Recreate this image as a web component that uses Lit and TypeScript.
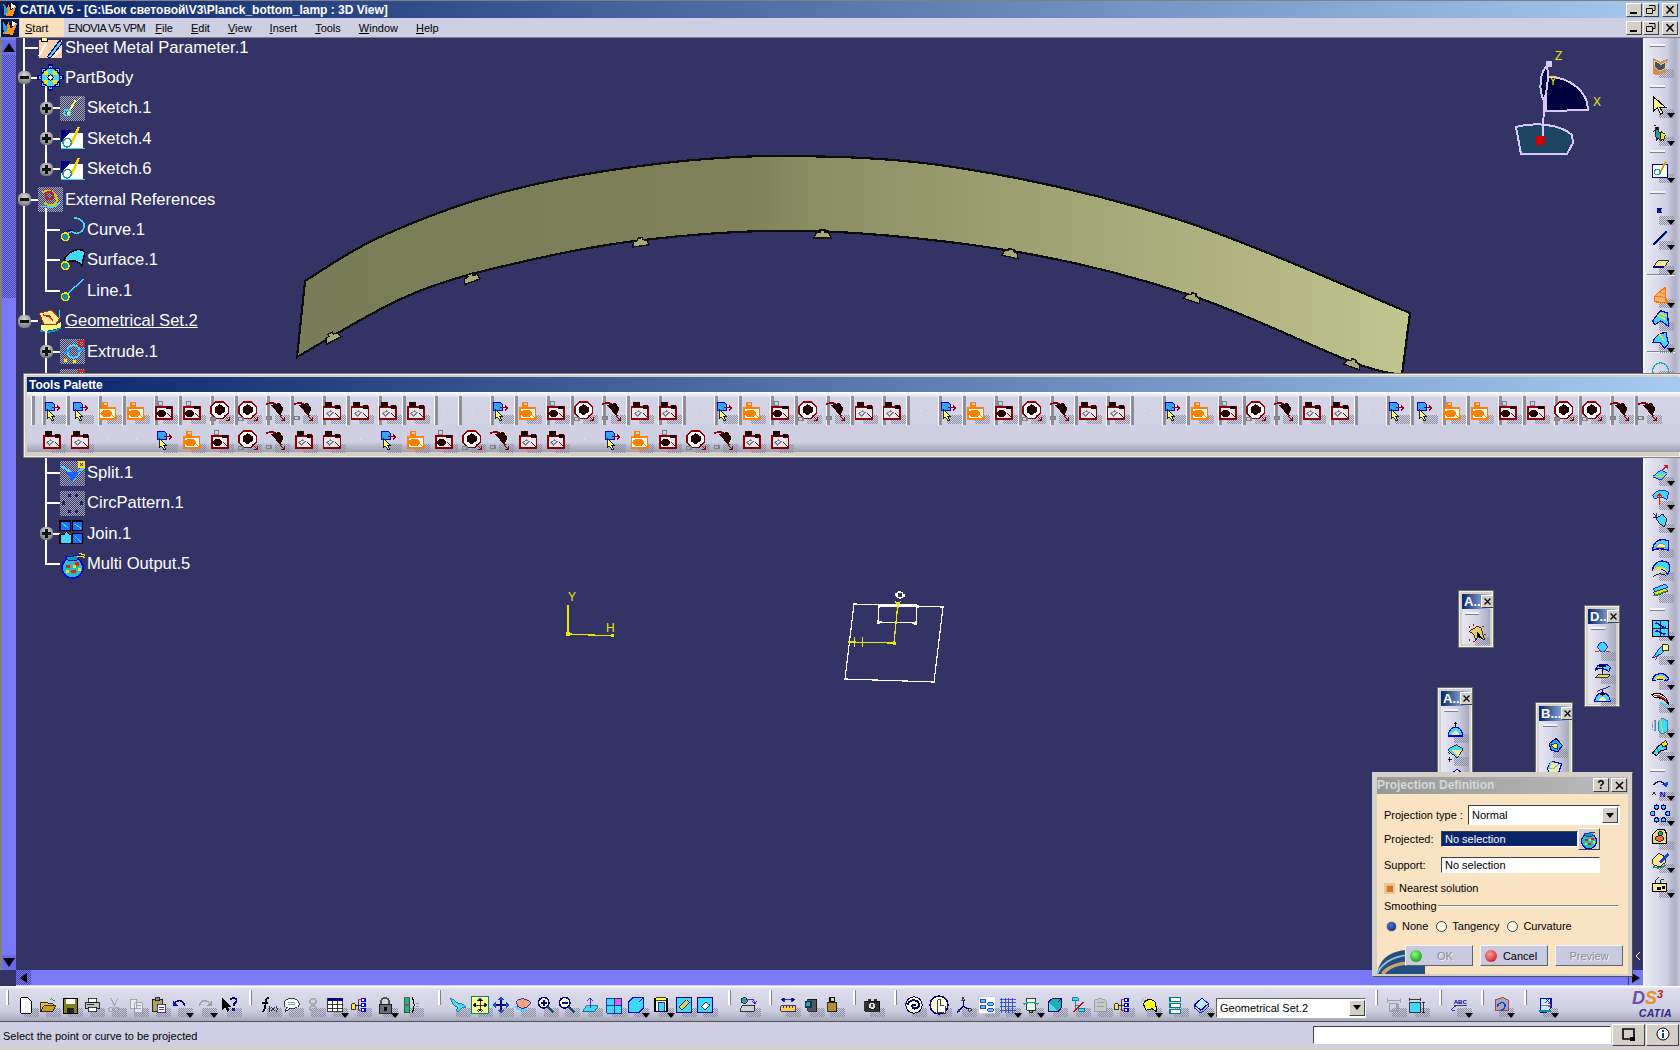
import { LitElement, html, css, svg } from 'lit';
import { customElement } from 'lit/decorators.js';

const K = '#000';
const N = '#000080';
const C = '#40d8ff';
const B = '#0000e0';
const Y = '#ffff80';
const R = '#900000';
const O = '#ff8000';
const G = '#808088';

const I: Record<string, unknown> = {
  // palette
  parrow: svg`<path d="M4 2h9l2 2v7H4z" fill="#3aa0f0" stroke="${B}" stroke-width="1.4"/><path d="M12 8h9M18 5l3 3-3 3" stroke="${R}" fill="none" stroke-width="1.6"/><path d="M6 9v13l3-3 3 5 2-1-3-5h4z" fill="${Y}" stroke="${K}"/>`,
  porange: svg`<rect x="2" y="8" width="19" height="14" fill="#fff" stroke="${O}" stroke-width="2"/><ellipse cx="10" cy="15" rx="7" ry="4.5" fill="${O}"/><path d="M6 2h5v4H6zM15 15l7 7M22 17v5h-5" stroke="${O}" fill="none" stroke-width="1.3"/>`,
  pbox: svg`<rect x="2" y="7" width="20" height="15" fill="#e8e8f0" stroke="${R}" stroke-width="2"/><ellipse cx="9" cy="15" rx="6" ry="4" fill="#200"/><path d="M14 6h8v4h-8z" fill="#200"/><path d="M5 1h5v4H5z" stroke="${G}" fill="none" stroke-width="1.3"/><path d="M16 15l6 6M22 17v5h-4" stroke="${R}" fill="none" stroke-width="1.3"/>`,
  pcircle: svg`<path d="M7 1h9l6 6v8l-6 6H7l-6-6V7z" fill="#fff" stroke="${R}" stroke-width="1.8"/><path d="M11.500 4l6 3.500v6l-6 3.500-6-3.500v-6z" fill="#200"/><path d="M1 20h5v3H1z" stroke="${G}" fill="none" stroke-width="1.3"/><path d="M17 17l6 6M23 19v4h-4" stroke="${R}" fill="none" stroke-width="1.3"/>`,
  pcurve: svg`<path d="M0 4C8 0 15 2 18 18" stroke="${R}" fill="none" stroke-width="1.8"/><path d="M6 5l10-3 5 7-4 9z" fill="#200"/><path d="M1 19h5v3H1z" stroke="${G}" fill="none" stroke-width="1.3"/><path d="M17 18l5 5M22 19v4h-4" stroke="${R}" fill="none" stroke-width="1.3"/>`,
  pframe: svg`<rect x="2" y="7" width="20" height="15" fill="#e8e8f0" stroke="${R}" stroke-width="2"/><path d="M4 1h8v6H4z" fill="#200"/><path d="M15 5h7v4h-7z" fill="#200"/><path d="M6 15l4-3 3 2-4 4z" stroke="${G}" fill="none" stroke-width="1.3"/><path d="M15 14l7 7M22 16v5h-5" stroke="${R}" fill="none" stroke-width="1.3"/>`,
  // tree
  param: svg`<path d="M1 5h22v17H1z" fill="#ffd0b0"/><path d="M3 1h6v5H3z" fill="#ff8" stroke="${K}"/><path d="M9 21L21 5l2 3-11 14z" fill="${C}" stroke="#006"/><path d="M1 20L8 8M14 21l8-7" stroke="#fff" stroke-width="2"/>`,
  gear: svg`<path d="M10 0h4v4h-4zM10 20h4v4h-4zM0 10h4v4H0zM20 10h4v4h-4zM3 3h4v4H3zM17 3h4v4h-4zM3 17h4v4H3zM17 17h4v4h-4z" fill="${C}" stroke="${N}"/><circle cx="12" cy="12" r="9" fill="${C}" stroke="${N}" stroke-width="1.4"/><path d="M6 6h4v4H6zM14 14h4v4h-4zM14 6h4v4h-4zM6 14h4v4H6z" fill="#ffe000"/><circle cx="12" cy="12" r="2.500" fill="#e8ffff" stroke="${K}"/>`,
  hsketch: svg`<path d="M15 4L7 18" stroke="#ffff60" stroke-width="2"/><circle cx="7" cy="16" r="3" fill="none" stroke="${C}" stroke-width="1.5"/><path d="M15 6l5-5" stroke="#fff"/>`,
  sketch: svg`<path d="M1 7h21v14H1z" fill="#fff"/><path d="M1 4h10L1 16z" fill="${N}"/><path d="M1 22h23" stroke="${C}"/><path d="M11 21l9-6 2 6z" fill="#fff"/><path d="M18 1l-7 16" stroke="#ffd000" stroke-width="2.4"/><circle cx="7" cy="16" r="4" fill="none" stroke="#20a0a0" stroke-width="1.6"/>`,
  hext: svg`<path d="M4 5c8-4 14 2 14 8s-8 6-12 2" fill="none" stroke="#e0c000" stroke-width="2"/><circle cx="11" cy="8" r="3.5" fill="none" stroke="#c02020" stroke-width="2"/><path d="M3 19c6-2 12 4 18-4" stroke="${C}" fill="none" stroke-width="1.5"/>`,
  curve: svg`<path d="M13 1c8 0 11 5 10 9s-6 8-12 4l-6 3" fill="none" stroke="${C}" stroke-width="1.5"/><path d="M5 15c2-2 5-3 7-2" stroke="${N}" fill="none"/><circle cx="5" cy="19" r="3.6" fill="#109090" stroke="#ffe000" stroke-width="1.5"/>`,
  surface: svg`<path d="M4 11C8 2 20-1 24 4c-2 6-2 9-3 13-3-5-10-6-15-3z" fill="${C}" stroke="${K}" stroke-width="1.4"/><circle cx="5" cy="17" r="3.6" fill="#109090" stroke="#ffe000" stroke-width="1.5"/>`,
  tline: svg`<path d="M23 1L6 16" stroke="${C}" stroke-width="1.3"/><circle cx="5" cy="18" r="3.6" fill="#109090" stroke="#ffe000" stroke-width="1.5"/>`,
  geoset: svg`<path d="M1 4l12-3 8 8-4 6H6z" fill="#ffe890" stroke="#a04000"/><path d="M5 6l6 1 3 4" fill="none" stroke="#d02020" stroke-width="1.5"/><path d="M3 15h15l4-3v6l-14 3H3z" fill="${Y}"/><path d="M2 21c8 2 14 1 20-3" stroke="#00a0c0" fill="none" stroke-width="1.6"/><path d="M21 1v8" stroke="${C}"/>`,
  extrude: svg`<circle cx="13" cy="12" r="6" fill="none" stroke="${C}" stroke-width="2"/><path d="M3 14l7-4M16 12l7-2" stroke="#2090ff" stroke-width="2"/><path d="M18 2h5v5h-5z" fill="none" stroke="#d02020" stroke-width="1.5"/><path d="M4 19h3v3H4zM12 20h3v3h-3z" fill="#ffe000"/>`,
  split: svg`<path d="M1 5l9 5 3 8 6-9 5-3" stroke="${C}" fill="none" stroke-width="2"/><path d="M6 11l6 9 7-10" fill="#2060ff"/><path d="M18 1h5v5h-5z" fill="none" stroke="#ffe000" stroke-width="1.5"/>`,
  circ: svg`<path d="M8 3h3v3H8zM14 3h3v3h-3zM2 10h3v3H2zM19 10h3v3h-3zM8 18h3v3H8zM14 18h3v3h-3z" fill="#202060"/>`,
  join: svg`<path d="M0 0h10v9H0zM12 0h10v9H12zM12 12h10v10H12z" fill="#2070ff" stroke="${K}"/><path d="M0 13h4l2-3 3 3h2v9H0z" fill="${C}" stroke="${K}"/><path d="M2 2l6 5M14 3l6 4M14 14l6 6" stroke="${C}"/>`,
  multi: svg`<circle cx="12" cy="15" r="10" fill="#20c0c0" stroke="${B}" stroke-width="1.6"/><path d="M5 5l14-2-3 5H8z" fill="#10a0a0" stroke="${B}"/><path d="M6 12h4v3H6zM14 10h4v3h-4zM11 17h4v3h-4z" fill="#e02020"/><path d="M12 12h3v3h-3zM6 17h3v3H6zM17 15h3v3h-3z" fill="#ffe000"/><path d="M18 1l6 2M16 4l8 1" stroke="#ffe000"/>`,
  // file bar
  new: svg`<path d="M5 2h10l4 4v17H5z" fill="#fff" stroke="${K}" stroke-width="1.3"/>`,
  open: svg`<path d="M2 21V8h8l2 2h7v4" fill="#e8c030" stroke="${K}"/><path d="M2 21l4-8h16l-4 8z" fill="#c8a020" stroke="${K}"/><path d="M14 5l3-3 4 4h-2" stroke="#00a000" fill="none"/>`,
  save: svg`<path d="M3 3h19v20H3z" fill="#808020" stroke="${K}" stroke-width="1.5"/><path d="M7 4h11v7H7z" fill="#fff"/><path d="M8 16h9v7H8z" fill="#202020"/>`,
  print: svg`<path d="M7 3h11v6H7z" fill="#fff" stroke="${K}"/><path d="M3 9h19v8H3z" fill="#c0c0c0" stroke="${K}"/><path d="M7 15h11v6H7z" fill="#fff" stroke="${K}"/><path d="M5 11h10" stroke="${K}"/>`,
  cut: svg`<path d="M8 3l5 11M17 3l-5 11" stroke="#a8a8b0" stroke-width="1.6"/><circle cx="8" cy="18" r="3" fill="none" stroke="#a8a8b0" stroke-width="1.6"/><circle cx="16" cy="18" r="3" fill="none" stroke="#a8a8b0" stroke-width="1.6"/>`,
  copy: svg`<path d="M4 4h9v12H4zM10 9h10v13H10z" fill="#e8e8f0" stroke="#90909a"/><path d="M12 13h6M12 16h6" stroke="#90909a"/>`,
  paste: svg`<path d="M4 4h14v17H4z" fill="#b0a060" stroke="${K}"/><path d="M8 2h6v4H8z" fill="#909090" stroke="${K}"/><path d="M11 11h11v11H11z" fill="#fff" stroke="${N}"/><path d="M13 15h7M13 18h7" stroke="${N}"/>`,
  undo: svg`<path d="M5 9c5-5 12-3 13 4" fill="none" stroke="${N}" stroke-width="2"/><path d="M2 6v7h7z" fill="${B}"/>`,
  redo: svg`<path d="M19 9c-5-5-12-3-13 4" fill="none" stroke="#a0a0a8" stroke-width="2"/><path d="M22 6v7h-7z" fill="#a0a0a8"/>`,
  help: svg`<path d="M3 2v17l4-4 3 6 3-2-3-5h5z" fill="${K}"/><path d="M14 5c1-3 8-3 8 1s-4 3-4 7" fill="none" stroke="${N}" stroke-width="2.6"/><path d="M16 16h4v4h-4z" fill="${N}"/>`,
  fx: svg`<path d="M12 2C7 2 8 8 7 13s-1 8-5 8M3 9h8" stroke="${K}" fill="none" stroke-width="2.4"/><path d="M13 13l-1 4 1 4M22 13l1 4-1 4M15 15l5 5M20 15l-5 5" stroke="${K}" fill="none"/>`,
  comment: svg`<ellipse cx="13" cy="10" rx="10" ry="7" fill="#fff" stroke="${K}"/><path d="M6 15l-2 6 6-4" fill="#fff" stroke="${K}"/><path d="M8 8h9M8 11h9" stroke="#20a0a0"/>`,
  link: svg`<circle cx="12" cy="7" r="4" fill="none" stroke="#a8a8b0" stroke-width="2"/><circle cx="12" cy="17" r="4" fill="none" stroke="#a8a8b0" stroke-width="2"/><path d="M10 5h4" stroke="#e0a030"/>`,
  table: svg`<path d="M2 3h20v18H2z" fill="#fff" stroke="${K}"/><path d="M2 3h20v4H2z" fill="${N}"/><path d="M2 11h20M2 16h20M8 7v14M15 7v14" stroke="${K}"/>`,
  tree: svg`<path d="M2 10h5v8H2z" fill="#ffe060" stroke="${K}"/><path d="M15 3h5v4h-5zM15 10h5v4h-5zM15 17h5v4h-5z" fill="#fff" stroke="${B}" stroke-width="1.4"/><path d="M7 12h8M11 5v14" stroke="${K}"/><path d="M11 5h4M11 19h4" stroke="#d00000"/>`,
  lock: svg`<path d="M7 11V7c0-6 10-6 10 0v4" fill="none" stroke="#505058" stroke-width="2.4"/><path d="M4 11h17v12H4z" fill="#707078" stroke="${K}"/><path d="M11 14h3v6h-3z" fill="${K}"/>`,
  params: svg`<path d="M3 2h7v9H3zM3 13h7v9H3z" fill="#20b0a0" stroke="#404000"/><path d="M13 2c3 0 1 8 4 10-3 2-1 10-4 10" fill="none" stroke="${K}" stroke-width="1.4"/><path d="M19 10h4M19 14h4" stroke="#808080"/>`,
  fly: svg`<path d="M2 3l8 6 10 3 3 3-6 1-5 5-2-1 1-5-6-4z" fill="${C}" stroke="#006080"/><path d="M10 10l4 4" stroke="#fff"/>`,
  fit: svg`<path d="M1 1h22v22H1z" fill="#ffff90" stroke="#008080" stroke-width="1.5"/><path d="M12 4v16M4 12h16M12 3l-3 3h6zM12 21l-3-3h6zM3 12l3-3v6zM21 12l-3-3v6z" fill="${K}" stroke="${K}"/>`,
  pan: svg`<path d="M12 2v20M2 12h20" stroke="${N}" stroke-width="2"/><path d="M12 1l-4 4h8zM12 23l-4-4h8zM1 12l4-4v8zM23 12l-4-4v8z" fill="#1050e0"/>`,
  rotate: svg`<path d="M3 7c6-5 15-4 19 2-2 6-10 10-17 5z" fill="#ffa080" stroke="${N}"/><path d="M2 14c4 6 12 6 16 3" stroke="${C}" fill="none" stroke-width="2"/>`,
  zoomin: svg`<circle cx="9" cy="9" r="7" fill="#fff" stroke="${N}" stroke-width="2"/><path d="M5 9h8M9 5v8" stroke="${N}" stroke-width="2"/><path d="M14 14l8 8" stroke="#105060" stroke-width="3"/>`,
  zoomout: svg`<circle cx="9" cy="9" r="7" fill="#fff" stroke="${N}" stroke-width="2"/><path d="M5 9h8" stroke="${N}" stroke-width="2"/><path d="M14 14l8 8" stroke="#105060" stroke-width="3"/>`,
  normal: svg`<path d="M2 21l5-8h16l-5 8z" fill="${C}" stroke="#006080"/><path d="M12 16V3M8 7l4-4 4 4" stroke="${B}" fill="none"/>`,
  multi4: svg`<path d="M2 3h20v20H2z" fill="${C}" stroke="${N}"/><path d="M12 3v20M2 13h20" stroke="${N}"/><path d="M13 4h8v8h-8z" fill="#e060e0"/>`,
  cube: svg`<path d="M2 8h14v14H2z" fill="${C}" stroke="${B}" stroke-width="1.5"/><path d="M2 8l6-6h14v14l-6 6M16 8l6-6" fill="${C}" stroke="${B}" stroke-width="1.5"/>`,
  cyl: svg`<path d="M4 3h16v18H4z" fill="#fff" stroke="${K}" stroke-width="1.5"/><ellipse cx="12" cy="4" rx="8" ry="2.5" fill="#ffff60" stroke="${K}"/><path d="M8 8h8v12H8z" fill="${C}" stroke="${N}"/>`,
  shade1: svg`<path d="M2 2h20v20H2z" fill="${C}" stroke="${N}" stroke-width="1.5"/><path d="M5 15L15 5l4 4-10 10z" fill="#e0d060" stroke="${K}"/>`,
  shade2: svg`<path d="M2 2h20v20H2z" fill="${C}" stroke="${N}" stroke-width="1.5"/><path d="M7 14l6-6 5 4-6 6z" fill="#fff" stroke="${K}"/>`,
  render: svg`<circle cx="7" cy="6" r="4" fill="#20a0b0" stroke="${K}"/><path d="M11 4h8l2 6M17 7l4 3 2-4" stroke="${B}" fill="none"/><path d="M2 17l3-5h16v6l-3 3H2z" fill="#d0d0d8" stroke="${K}"/>`,
  measure: svg`<path d="M3 5h18M3 5l4-3v6zM21 5l-4-3v6z" fill="${N}" stroke="${N}"/><path d="M2 13h20v7H2z" fill="#ffd040" stroke="${N}"/><path d="M6 13v3M10 13v3M14 13v3M18 13v3" stroke="${N}"/>`,
  inertia: svg`<path d="M6 4h12v16H6z" fill="#505860" stroke="${K}"/><path d="M3 7h9v9H3z" fill="#103060"/><circle cx="7" cy="11" r="3" fill="#20b0a0"/>`,
  weight: svg`<path d="M9 2h6v5H9z" fill="none" stroke="${K}" stroke-width="2"/><path d="M6 8h12v13H6z" fill="#b09030" stroke="${K}"/>`,
  camera: svg`<path d="M2 7h20v13H2z" fill="#303030" stroke="${K}"/><circle cx="12" cy="13" r="5" fill="#e0e0e0" stroke="${K}"/><path d="M7 4h4v3H7zM15 4h4v3h-4z" fill="#303030"/><circle cx="12" cy="13" r="2" fill="#404040"/>`,
  swirl: svg`<circle cx="12" cy="12" r="11" fill="#ffffd0" stroke="${N}" stroke-width="1.4"/><path d="M4 12c0-6 10-9 14-3 3 6-5 10-8 6-2-3 3-5 4-2" fill="none" stroke="${N}" stroke-width="2.6"/>`,
  hand: svg`<circle cx="12" cy="12" r="12" fill="#ffffd0" stroke="${N}" stroke-width="2"/><path d="M10 22V5h4v8h5l2 2v8z" fill="#fff" stroke="${K}"/>`,
  axes: svg`<path d="M11 14V3M11 14l9 4M11 14l-8 7" stroke="${N}" stroke-width="1.5"/><path d="M11 1L9 6h4zM3 22l1-4 3 2zM22 18l-4-2v4z" fill="#ffd000" stroke="${N}"/>`,
  catalog: svg`<path d="M1 1h22v22H1z" fill="#fff" stroke="#c0c0c8" stroke-dasharray="2 1"/><path d="M3 5h7v3H3zM13 9h7v3h-7zM3 13h7v3H3zM13 17h7v3h-7z" fill="${C}" stroke="${B}"/>`,
  grid: svg`<path d="M3 2v20M8 2v20M13 2v20M18 2v20M1 4h21M1 9h21M1 14h21M1 19h21" stroke="#1030e0"/>`,
  tool2: svg`<path d="M6 3h12v16H6z" fill="#e0ffe0" stroke="${K}"/><path d="M2 11c6-3 14-3 20 0" stroke="#20a0a0" fill="none" stroke-width="2"/><path d="M10 19v3h4v-3" stroke="${K}" fill="none"/>`,
  cube2: svg`<path d="M3 8h13v13H3z" fill="#50e0e0" stroke="${N}" stroke-width="1.5"/><path d="M3 8l6-5h12v12l-5 6M16 8l5-5" fill="#20b0b0" stroke="${N}" stroke-width="1.5"/>`,
  branch: svg`<path d="M4 2h8v4H4zM13 16h8v4h-8z" fill="${C}" stroke="#006080"/><path d="M8 6v14M8 13h5" stroke="#006080"/><path d="M6 21L19 8" stroke="#d00000" stroke-width="1.5"/>`,
  ghost: svg`<path d="M4 6l8-3 8 3v14H4z" fill="#c8c8c8" stroke="#909098"/><path d="M8 9h9M8 14h9" stroke="#909098"/>`,
  yellow: svg`<path d="M5 12c0-9 13-9 16-2l1 11-6-4-8 2z" fill="#ffff20" stroke="${K}" stroke-width="1.4"/><path d="M2 6l4-4 5 1" stroke="#a0a0a8" fill="none" stroke-dasharray="2 1"/>`,
  list: svg`<path d="M4 2h14v5H4zM4 10h14v5H4zM4 18h14v5H4z" fill="#fff" stroke="#008080" stroke-width="1.6"/>`,
  plane2: svg`<path d="M3 12L13 3l9 7-10 9z" fill="#c0e8ff" stroke="${B}" stroke-width="1.4"/><path d="M3 12v4l9 7 10-9v-4" fill="none" stroke="${N}"/>`,
  dim1: svg`<path d="M3 6h18M3 3v6M21 3v6M6 10h10v10H6zM18 10v10" stroke="#a0a0a8" fill="none" stroke-width="1.4"/>`,
  dim2: svg`<path d="M2 8h14v14H2z" fill="${C}" stroke="${K}"/><path d="M2 4h14M2 2v4M16 2v4M20 8v14M18 8h4M18 22h4" stroke="${K}"/>`,
  abc: svg`<text x="5" y="10" font-size="8" font-family="Liberation Sans" font-weight="700" fill="${N}">ABC</text><path d="M5 13h18M2 19c3-5 3-5 6-5M2 19h4" stroke="${N}" fill="none"/>`,
  vis: svg`<path d="M4 5l10-3 8 4v13H4z" fill="#a8a8b0" stroke="#a02020"/><path d="M7 15c0-6 8-8 10-4s-2 8-5 8" stroke="#1040e0" fill="none" stroke-width="2"/>`,
  snap: svg`<path d="M6 3h14v13l-6 6H6z" fill="#c0f0ff" stroke="${B}" stroke-width="1.4"/><path d="M4 20h16" stroke="#109090" stroke-width="1.6"/><path d="M7 12h13M16 9l4 3-4 3" stroke="#e02020" fill="none"/><path d="M12 3l6 6M18 3l-6 6" stroke="${N}"/>`,
  // right bar
  analysis: svg`<path d="M2 2l10 5 10-4-4 10 1 8-10 3-7-1z" fill="#d09050"/><path d="M5 6l8 5 6-4-1 9-8 3-5-5z" fill="#505058" stroke="#e0e0e0"/>`,
  select: svg`<path d="M3 1v18l5-4 4 8 3-2-4-7h7z" fill="${Y}" stroke="${K}" stroke-width="1.4"/>`,
  spark: svg`<path d="M6 4h3v3H6zM2 10h2M4 2h2" stroke="${K}"/><path d="M5 8l4-1 1 3 5 2-2 9-4-3-2 3z" fill="#20a0a0" stroke="${K}"/><path d="M12 10l6 4-2 7-4-2z" fill="#ffe000" stroke="${K}"/>`,
  rsketch: svg`<path d="M2 4h19v17H2z" fill="#fff" stroke="${N}" stroke-width="1.5"/><path d="M19 1l-8 14" stroke="#d8a000" stroke-width="2.4"/><circle cx="8" cy="14" r="3.6" fill="none" stroke="#20a0a0" stroke-width="1.4"/>`,
  point: svg`<path d="M8 6h6v6H8z" fill="${N}"/><path d="M12 8h2v3h-2z" fill="${C}"/>`,
  line: svg`<path d="M3 21L20 4" stroke="${N}" stroke-width="3"/><path d="M5 21L21 5" stroke="${C}"/>`,
  plane: svg`<path d="M3 17l6-7h14l-6 7z" fill="#ffe890" stroke="${K}"/><path d="M3 18h14" stroke="${N}" stroke-width="2"/>`,
  flame: svg`<path d="M4 20C3 12 8 9 18 2l1 16 3 3z" fill="#ffb070" stroke="#ff7000" stroke-width="1.5"/><path d="M5 14c5-2 9-1 13 1M8 9c4-1 7 0 10 1" stroke="#ff7000" fill="none"/>`,
  sweep: svg`<path d="M2 15L12 2l9 3 1 17-5-4-5-3-7 5z" fill="${C}" stroke="${B}" stroke-width="1.5"/><path d="M8 8l10 5M11 5l9 4" stroke="#ffe000" stroke-width="2"/>`,
  blend: svg`<path d="M2 15C5 6 11 2 19 2l3 14-5 6-6-8-5 1z" fill="${C}" stroke="${B}" stroke-width="1.5"/><path d="M10 3l7 10" stroke="#ffe000" stroke-width="2"/>`,
  ring: svg`<circle cx="12" cy="16" r="10" fill="none" stroke="#20a0c0" stroke-width="1.5"/>`,
  r1: svg`<path d="M2 16l10-8 8 4-8 8z" fill="${C}" stroke="${B}"/><path d="M6 13h12M5 16h12" stroke="#ffe000"/><path d="M13 9L21 2M17 2h4v4" stroke="#c02020" stroke-width="2" fill="none"/>`,
  r2: svg`<path d="M2 10C6 2 18 0 22 6L20 15c-4-4-10-5-15-1z" fill="${C}" stroke="${B}"/><path d="M11 22V8M8 11l3-4 3 4" stroke="#d02000" fill="#ffe000" stroke-width="1.6"/>`,
  r3: svg`<path d="M6 9l9-5 5 6-3 10-6-4z" fill="${C}" stroke="${K}"/><path d="M3 3l4 5M7 3v5H3" stroke="${N}" fill="none"/>`,
  r4: svg`<path d="M2 18C3 7 10 2 22 6v12c-6-2-13-3-20 0z" fill="${C}" stroke="${B}" stroke-width="1.6"/><path d="M6 15c2-6 8-7 12-3l1 3c-6-1-9-1-13 0z" fill="#fff0a0" stroke="#d07020"/>`,
  r5: svg`<path d="M2 14C3 5 12-1 22 5c3 6 2 10-1 14-3-6-11-9-19-5z" fill="${C}" stroke="${B}" stroke-width="1.6"/><path d="M3 15C6 10 16 9 20 16" stroke="#ffe000" stroke-width="2.4" fill="none"/><path d="M3 22c5-4 11-4 16-1" stroke="${K}" fill="none"/>`,
  r6: svg`<path d="M2 10l16-6 3 4-15 6z" fill="${C}" stroke="${B}"/><path d="M3 14l15-5 3 4-15 6z" fill="#ffe000" stroke="${N}"/><path d="M3 19l16-6" stroke="#20a040" stroke-width="2"/>`,
  r7: svg`<path d="M2 2h20v20H2z" fill="${C}" stroke="${K}" stroke-width="1.4"/><path d="M5 6c6-4 8 8 14 4M5 16c6-4 8 6 14 2" stroke="${B}" stroke-width="2" fill="none"/><path d="M12 2v20M2 12h20" stroke="${K}"/>`,
  r8: svg`<path d="M2 19L11 6l7-3v6l-7 6z" fill="${C}" stroke="${B}"/><path d="M14 2h8v8h-8z" fill="#ffff90" stroke="${K}"/><path d="M6 21l4-7" stroke="${R}"/>`,
  r9: svg`<path d="M2 15C3 7 16 3 22 13l-1 3c-6-2-13-2-19 0z" fill="${C}" stroke="${B}" stroke-width="1.6"/><path d="M5 14c2-5 10-6 14-1l-1 2c-4-1-8-1-13 0z" fill="#ffe000"/>`,
  r10: svg`<path d="M1 5c9-6 20 2 21 12-3-5-10-9-18-9z" fill="#fff" stroke="${K}" stroke-width="1.4"/><path d="M4 6c6-1 14 3 16 8" stroke="#d02020" stroke-width="2" fill="none"/><path d="M11 15c4-1 8 3 9 7" stroke="${C}" stroke-width="2" fill="none"/>`,
  r11: svg`<path d="M4 6h2v12H4M14 3l7 3v13l-7 4-5-5V8z" fill="${C}" stroke="#208060"/><path d="M2 7v11M6 5v15" stroke="#808088" stroke-dasharray="2 1"/><path d="M12 4l3 18" stroke="#ffe000"/>`,
  r12: svg`<path d="M2 18L10 8l8-2 2 7-8 2-5 6z" fill="${C}" stroke="${K}" stroke-width="1.4"/><path d="M13 6l6-4 2 5-6 3z" fill="#ffe000" stroke="${K}"/><path d="M7 10l4 8" stroke="#208040"/>`,
  r13: svg`<path d="M3 8c4-6 12-6 15 0" stroke="${N}" fill="none" stroke-width="1.4"/><path d="M22 3l-2 8-6-4z" fill="#1040e0"/><path d="M2 20l4-4M6 20l-4-4" stroke="${K}"/><text x="11" y="23" font-size="10" font-weight="700" font-family="Liberation Sans" fill="${B}">N</text>`,
  r14: svg`<g fill="${C}" stroke="${N}" stroke-width="1.6"><circle cx="7" cy="4" r="2.6"/><circle cx="16" cy="4" r="2.6"/><circle cx="21" cy="12" r="2.6"/><circle cx="16" cy="20" r="2.6"/><circle cx="7" cy="20" r="2.6"/><circle cx="2" cy="12" r="2.6"/></g>`,
  r15: svg`<path d="M2 8l6-6h9l3 6v12H2z" fill="#e8d890" stroke="${K}" stroke-width="1.4"/><path d="M6 12c3-4 9-3 10 1s-8 5-10 2z" fill="#e87030" stroke="${K}"/><circle cx="12" cy="7" r="2.6" fill="#20a0a0" stroke="${K}"/>`,
  r16: svg`<path d="M2 10l8-7 6 3 3 8-8 6-9-3z" fill="#ffe890" stroke="${K}"/><path d="M10 14l11-12 2 3-10 11z" fill="#1040e0"/><path d="M3 20c5 2 10 2 16-2" stroke="#209060" stroke-width="2" fill="none"/>`,
  r17: svg`<path d="M2 9h18v11H2z" fill="#ffe890" stroke="${K}" stroke-width="1.4"/><path d="M6 9V5l4-3M12 9V5h5" stroke="${K}" fill="none"/><path d="M8 14h4v4H8zM14 13h4v4h-4z" fill="${K}"/>`,
  // mini windows
  m1: svg`<path d="M3 9l10-6 5 2 4 15-8-4-3 5-2-7z" fill="#e8d060" stroke="${K}"/><path d="M12 8l9 12-8-4z" fill="${K}"/><path d="M2 4h2M7 1h2M19 3h2M2 20h2M8 22h2M22 13h2" stroke="#d00000" stroke-width="2"/>`,
  m2: svg`<path d="M3 19C3 11 8 8 12 8s9 3 9 11z" fill="${C}" stroke="${B}" stroke-width="1.5"/><path d="M7 18c1-4 3-6 5-6s4 2 5 6z" fill="#ffe890"/><path d="M12 1v6M10 3h4" stroke="${K}" stroke-width="1.6"/>`,
  m3: svg`<path d="M2 7l12 11 8-12L13 1z" fill="${C}" stroke="${K}"/><path d="M7 7l8 9 5-8" fill="#ffe890"/><path d="M2 10l3 3M2 20h6M5 17v6" stroke="${K}"/>`,
  m4: svg`<path d="M2 12l12-9 8 6-8 12z" fill="#ffe890" stroke="${B}" stroke-width="1.4"/>`,
  m5: svg`<path d="M5 10l9-7 8 9-6 8-8-2z" fill="#20b0ff" stroke="${N}" stroke-width="1.4"/><path d="M8 11l7-2 1 8-5-2z" fill="#ffff20" stroke="${N}"/>`,
  m6: svg`<path d="M3 12l5-9 13 3-5 15-10-2z" fill="#ffe890" stroke="${B}" stroke-width="1.5"/><path d="M8 3l-3 9h6l6-6" stroke="${C}" stroke-width="2" fill="none"/><path d="M20 22l2-2" stroke="${R}" stroke-width="2"/>`,
  d1: svg`<circle cx="12" cy="10" r="6" fill="#2090ff" stroke="${B}"/><path d="M6 10l6-6 6 6-6 6z" fill="${C}"/><path d="M2 16h6M16 16h6" stroke="#e03030" stroke-width="2"/><path d="M5 13h2M17 13h2" stroke="#ffe000" stroke-width="2"/>`,
  d2: svg`<path d="M3 10C5 2 17 0 22 7l-2 5c-4-4-12-5-17-2z" fill="${C}" stroke="${B}" stroke-width="1.5"/><path d="M12 4v16M8 5h8" stroke="${K}" stroke-width="1.6"/><path d="M3 20h15l4-4H6z" fill="#ffe000" stroke="${N}"/>`,
  d3: svg`<path d="M2 21C3 14 7 10 12 10s9 4 10 11z" fill="${C}" stroke="${B}" stroke-width="1.5"/><path d="M7 20c1-3 2-5 5-5s4 2 5 5z" fill="#ffff90"/><path d="M12 5v8M8 10l4 3 4-3" stroke="${K}" fill="none" stroke-width="1.6"/><path d="M5 8l16-6" stroke="${N}"/>`,
  logo: svg`<path d="M0 0h24v24H0z" fill="#081848"/><path d="M2 20L10 4l3 9 9-9-6 17z" fill="#ff9020"/><path d="M2 3l8 9-6 9z" fill="#20a0e0"/><path d="M14 2l6 4-6 5z" fill="#fff"/>`,
  planet: svg`<path d="M0 40C4 14 24 6 52 12v28z" fill="#205080"/><path d="M0 40C6 24 22 14 48 16" stroke="#a0c0e0" fill="none" stroke-width="2"/><path d="M6 40C14 28 30 24 48 28" stroke="#d0a070" fill="none" stroke-width="4"/>`
};

type Tree = { lv: number; t: string; ic?: string; hatch?: boolean; tog?: string; pipe?: boolean; last?: boolean; first?: boolean; u?: boolean };
const TREE: Tree[] = [
  { lv: 0, t: 'Sheet Metal Parameter.1', ic: 'param' },
  { lv: 0, t: 'PartBody', ic: 'gear', tog: '-' },
  { lv: 1, t: 'Sketch.1', ic: 'hsketch', hatch: true, tog: '+', pipe: true, first: true },
  { lv: 1, t: 'Sketch.4', ic: 'sketch', tog: '+', pipe: true },
  { lv: 1, t: 'Sketch.6', ic: 'sketch', tog: '+', pipe: true, last: true },
  { lv: 0, t: 'External References', ic: 'hext', hatch: true, tog: '-' },
  { lv: 1, t: 'Curve.1', ic: 'curve', pipe: true, first: true },
  { lv: 1, t: 'Surface.1', ic: 'surface', pipe: true },
  { lv: 1, t: 'Line.1', ic: 'tline', pipe: true, last: true },
  { lv: 0, t: 'Geometrical Set.2', ic: 'geoset', tog: '-', u: true, last: true },
  { lv: 1, t: 'Extrude.1', ic: 'extrude', hatch: true, tog: '+', first: true },
  { lv: 1, t: '', ic: 'extrude', hatch: true },
  { lv: 1, t: '' },
  { lv: 1, t: '' },
  { lv: 1, t: 'Split.1', ic: 'split', hatch: true },
  { lv: 1, t: 'CircPattern.1', ic: 'circ', hatch: true },
  { lv: 1, t: 'Join.1', ic: 'join', tog: '+' },
  { lv: 1, t: 'Multi Output.5', ic: 'multi', last: true }
];

const a = 'parrow', o = 'porange', b = 'pbox', c = 'pcircle', k = 'pcurve', f = 'pframe';
const GROUP = [a, o, b, c, k, f, f];
const SLOTS: (string | null)[] = [
  a, a, o, o, b, b, c, c, k, k, f, f, f, f, null, null,
  ...GROUP, null, ...GROUP, null, ...GROUP, null, ...GROUP, null,
  a, a, o, o, b, b, c, c, k, k,
  f, f, null, null, ...GROUP, null, ...GROUP, null, ...GROUP
];
const FIRST_ROW = 58;

// [icon, centre on the bar's axis, has drop arrow]
type Bar = [string, number, boolean?];
const BOTTOM: Bar[] = [
  ['|', 7], ['new', 26], ['open', 48], ['save', 70], ['print', 92], ['cut', 114], ['copy', 136], ['paste', 158],
  ['undo', 180, true], ['redo', 204, true], ['help', 229],
  ['|', 250], ['fx', 269], ['comment', 291], ['link', 313], ['table', 335, true], ['tree', 359], ['lock', 385, true], ['params', 411],
  ['|', 439], ['fly', 458], ['fit', 480], ['pan', 501], ['rotate', 523], ['zoomin', 546], ['zoomout', 567], ['normal', 590], ['multi4', 614],
  ['cube', 636, true], ['cyl', 661, true], ['shade1', 684], ['shade2', 705],
  ['|', 729], ['render', 748], ['|', 770], ['measure', 788], ['inertia', 812], ['weight', 832], ['|', 854], ['camera', 872],
  ['|', 895], ['swirl', 914], ['hand', 939], ['axes', 964], ['catalog', 987], ['grid', 1008, true], ['tool2', 1031, true], ['cube2', 1055],
  ['branch', 1078], ['ghost', 1100], ['tree', 1122], ['yellow', 1149, true], ['list', 1176], ['plane2', 1201, true]
];
const BOTTOM2: Bar[] = [
  ['|', 1376], ['dim1', 1394], ['dim2', 1417], ['|', 1440], ['abc', 1459, true], ['|', 1482], ['vis', 1501, true], ['|', 1525], ['snap', 1545, true]
];
const RIGHT: Bar[] = [
  ['-', 45], ['analysis', 65], ['-', 86], ['select', 105, true], ['spark', 133, true], ['-', 151], ['rsketch', 170, true], ['-', 192],
  ['point', 212, true], ['line', 237, true], ['plane', 262, true], ['=', 275], ['flame', 295, true], ['sweep', 318], ['blend', 340, true], ['=', 352], ['ring', 367],
  ['r1', 473, true], ['r2', 497, true], ['r3', 520, true], ['r4', 545], ['r5', 568], ['r6', 590],
  ['-', 609], ['r7', 628, true], ['r8', 652, true], ['r9', 677, true], ['r10', 700, true], ['r11', 725, true], ['r12', 748, true],
  ['-', 770], ['r13', 788, true], ['r14', 813, true], ['r15', 837], ['r16', 860, true], ['r17', 885, true]
];

// smooth line through points, for the part edges
function spline(p: number[][]): string {
  let d = '';
  for (let i = 0; i < p.length - 1; i++) {
    const p0 = p[i - 1] || p[i], p1 = p[i], p2 = p[i + 1], p3 = p[i + 2] || p2;
    const c1 = [p1[0] + (p2[0] - p0[0]) / 6, p1[1] + (p2[1] - p0[1]) / 6];
    const c2 = [p2[0] - (p3[0] - p1[0]) / 6, p2[1] - (p3[1] - p1[1]) / 6];
    d += `C${c1[0]} ${c1[1]} ${c2[0]} ${c2[1]} ${p2[0]} ${p2[1]}`;
  }
  return d;
}
const TOP_EDGE = [[305, 281], [380, 237], [500, 193], [640, 166], [782, 156], [960, 168], [1180, 220], [1410, 313]];
const LOW_EDGE = [[1402, 375], [1352, 362], [1190, 295], [1018, 252], [814, 231], [643, 240], [500, 267], [403, 298], [297, 357]];
const BAND = `M305 281${spline(TOP_EDGE)}L1402 375${spline(LOW_EDGE)}Z`;
const TABS = [[332, 338, -28], [471, 279, -20], [640, 243, -8], [822, 235, 0], [1010, 254, 12], [1192, 298, 18], [1352, 364, 20]];

const ico = (n: string, extra = '') => html`<span class="ico ${extra}"><svg viewBox="0 0 24 24" shape-rendering="crispEdges">${I[n]}</svg></span>`;

@customElement('app-root')
export class AppRoot extends LitElement {
  static styles = css`
    :host { display: block; }
    * { box-sizing: border-box; }
    .app { width: 1680px; height: 1050px; display: flex; flex-direction: column; overflow: hidden; background: #cfcfe3; font-family: "Liberation Sans", Arial, sans-serif; font-size: 11px; color: #000; }
    .ico { position: relative; display: inline-block; width: 22px; height: 22px; flex: none; }
    .ico svg { position: relative; display: block; width: 100%; height: 100%; overflow: visible; }
    .sh::before { content: ''; position: absolute; right: -4px; bottom: -3px; width: 15px; height: 9px; background: repeating-conic-gradient(#8d8da3 0 25%, transparent 0 50%) 0 0 / 2px 2px; }

    .title { height: 18px; display: flex; align-items: center; gap: 2px; padding: 0 2px; border-top: 1px solid #808080; background: linear-gradient(90deg, #0a246a, #a6caf0); color: #fff; font-weight: 700; font-size: 12px; }
    .title .ico { width: 16px; height: 16px; }
    .title span.txt { flex: 1; white-space: nowrap; }
    .win { display: flex; }
    .wb { width: 16px; height: 14px; margin-left: 1px; background: #d4d0c8; border: 1px solid; border-color: #fff #404040 #404040 #fff; position: relative; }
    .wb svg { position: absolute; inset: 0; width: 100%; height: 100%; }
    .wb.cl { margin-left: 3px; }
    .menu { height: 20px; display: flex; align-items: center; padding-left: 1px; background: #cfcfe3; border-bottom: 1px solid #808088; font-size: 11px; }
    .menu .ico { width: 18px; height: 18px; }
    .start { height: 19px; width: 44px; margin-left: 1px; padding-left: 5px; display: flex; align-items: center; background: #fbe2bc; margin-right: 4px; white-space: pre; }
    .mi { margin-right: 18px; white-space: nowrap; }
    .mi.en { margin-right: 10px; letter-spacing: -.55px; }
    .menu .win { margin-left: auto; padding-right: 2px; }
    u { text-decoration: underline; }

    .work { flex: 1; position: relative; display: flex; overflow: hidden; min-height: 0; }
    .main { flex: 1; display: flex; flex-direction: column; min-width: 0; }
    .view { flex: 1; position: relative; display: flex; min-height: 0; background: #333366; }
    .canvas { position: absolute; left: 0; top: 0; }
    .vs { width: 16px; border-left: 2px solid #808080; display: flex; flex-direction: column; position: relative; background: #7878f8; }
    .vs .btn { height: 15px; margin-top: 2px; background: #6a6ae8; display: flex; align-items: center; justify-content: center; }
    .vs .dots { height: 243px; background: repeating-conic-gradient(#7878f8 0 25%, #4a4aa8 0 50%) 0 0 / 2px 2px; }
    .vs .fill { flex: 1; }
    .vs .btn.end { margin-top: 0; }
    .tu { width: 0; height: 0; border: 6px solid transparent; border-top: 0; border-bottom: 9px solid #000; }
    .td { width: 0; height: 0; border: 6px solid transparent; border-bottom: 0; border-top: 9px solid #000; }
    .tl { width: 0; height: 0; border: 5px solid transparent; border-left: 0; border-right: 7px solid #000; }
    .tr { width: 0; height: 0; border: 5px solid transparent; border-right: 0; border-left: 8px solid #000; }
    .hs { height: 16px; display: flex; align-items: center; background: #7878f8; border-bottom: 1px solid #d0d0ff; }
    .hs .corner { width: 16px; height: 16px; background: #333366; }
    .hs .lb { width: 15px; height: 15px; display: flex; align-items: center; justify-content: center; background: repeating-conic-gradient(#7878f8 0 25%, #4a4aa8 0 50%) 100% 0 / 2px 2px; }
    .hs .mid { flex: 1; }
    .hs .rb { width: 15px; height: 15px; display: flex; align-items: center; justify-content: center; border-left: 1px solid #333366; }

    .tree { position: absolute; left: 16px; top: -5.6px; color: #fff; font-size: 16.6px; }
    .row { height: 30.4px; display: flex; align-items: center; white-space: nowrap; }
    .cell { width: 22px; height: 100%; position: relative; flex: none; }
    .cell.pipe::before, .cell.node::before { content: ''; position: absolute; left: 7px; top: -1px; bottom: -1px; width: 2px; background: #fff; }
    .cell.node.first::before { top: -7px; }
    .cell.node.end::before { bottom: 50%; }
    .cell.node::after { content: ''; position: absolute; left: 7px; right: 0; top: calc(50% - 1px); height: 2px; background: #fff; }
    .tog { position: absolute; left: 2px; top: calc(50% - 6.5px); width: 13px; height: 13px; z-index: 1; border-radius: 5px; background: radial-gradient(circle at 50% 30%, #d8d8d8, #808080 75%); }
    .tog::before { content: ''; position: absolute; left: 2px; right: 2px; top: 5px; height: 3px; background: #111; }
    .tog.plus::after { content: ''; position: absolute; top: 2px; bottom: 2px; left: 5px; width: 3px; background: #111; }
    .tic { width: 25px; height: 25px; flex: none; }
    .tic .ico { width: 25px; height: 25px; }
    .tic.hatch { background: repeating-conic-gradient(#a8a8b4 0 25%, #3a3a6e 0 50%) 0 0 / 2px 2px; }
    .lbl { margin-left: 2px; }
    .lbl.u { text-decoration: underline; }

    .pal { position: absolute; left: 23px; top: 335px; width: 1657px; height: 85px; z-index: 2; background: #d4d0c8; border: 1px solid #808078; border-right: 0; padding: 3px 0 3px 3px; box-shadow: inset 0 0 0 1px #f0f0e8; }
    .bar-t { height: 15px; padding-left: 2px; display: flex; align-items: center; background: linear-gradient(90deg, #0a246a, #a6caf0); color: #fff; font-weight: 700; font-size: 12px; white-space: nowrap; }
    .pal-b { height: 60px; position: relative; background: linear-gradient(180deg, #fff 0, #d4d4e6 6px, #cfcfe3 50px, #9e9eb0 60px); }
    .pal-b::before { content: ''; position: absolute; left: 4px; top: 4px; width: 3px; height: 29px; background: #8e8e98; border-left: 1px solid #fff; }
    .slots { display: flex; flex-wrap: wrap; padding: 4px 0 0 11px; }
    .slot { width: 28px; height: 29px; display: flex; align-items: center; justify-content: center; position: relative; }
    .slot .ico { width: 20px; height: 20px; }
    .slot.blank::after { content: ''; width: 1px; height: 1px; background: #f0f0d0; }
    .slot.g0::before, .slot.g1::before { content: ''; position: absolute; top: 0; width: 3px; height: 29px; background: #8e8e98; border-left: 1px solid #fff; }
    .slot.g0::before { left: 4px; }
    .slot.g1::before { left: 0; }

    .bt { height: 36px; display: flex; align-items: center; position: relative; padding-top: 3px; border-bottom: 1px solid #505058; background: linear-gradient(180deg, #fff 0, #dcdcec 3px, #cfcfe3 24px, #a8a8bc 35px); }
    .bi { position: relative; flex: none; display: flex; align-items: center; justify-content: center; width: 22px; height: 22px; }
    .bi .ico { width: 18px; height: 18px; }
    .drop { position: absolute; right: -3px; bottom: -2px; width: 0; height: 0; border: 4px solid transparent; border-bottom: 0; border-top: 5px solid #000; }
    .grip { flex: none; width: 3px; height: 15px; background: #fff; border-right: 1px solid #808088; margin-bottom: 15px; }
    .combo { flex: none; width: 150px; height: 20px; margin: 5px 0 0 4px; display: flex; align-items: center; background: #fff; border: 1px solid; border-color: #606068 #fff #fff #606068; padding-left: 3px; font-size: 11px; }
    .cb-t { flex: 1; }
    .cb-b { width: 16px; height: 16px; display: flex; align-items: center; justify-content: center; background: #d4d0c8; border: 1px solid; border-color: #fff #404040 #404040 #fff; }
    .cb-b i { display: block; width: 0; height: 0; border: 4px solid transparent; border-bottom: 0; border-top: 5px solid #000; }
    .ds { position: absolute; right: 8px; top: 3px; width: 40px; display: flex; flex-direction: column; align-items: flex-end; }
    .ds .m { display: flex; align-self: flex-start; font-size: 18px; line-height: 19px; height: 19px; font-weight: 700; font-style: italic; color: #6a50a8; }
    .ds .m b { color: #e89020; }
    .ds .m em { color: #c02020; font-size: 11px; line-height: 11px; }
    .ds .n { font-size: 10.5px; line-height: 11px; font-weight: 700; font-style: italic; color: #2a2a80; letter-spacing: .4px; }

    .st { height: 25px; display: flex; align-items: center; background: #cfcfe3; padding-left: 3px; font-size: 11px; }
    .st .msg { width: 1310px; padding-top: 2px; }
    .st input { width: 298px; height: 18px; border: 1px solid; border-color: #404048 #fff #fff #404048; background: #fff; margin: 0 1px 0 0; padding: 0; }
    .sb { width: 33px; height: 22px; margin-right: 1px; background: #d4d0c8; border: 1px solid; border-color: #fff #404040 #404040 #fff; display: flex; align-items: center; justify-content: center; }
    .sb svg { width: 16px; height: 16px; }
    .foot { height: 3px; background: #d4d0c8; }

    .rt { width: 37px; flex: none; display: flex; flex-direction: column; align-items: center; position: relative; padding-right: 4px; border-left: 2px solid #f4f4fa; background: linear-gradient(90deg, #e8e8f4 0, #d8d8ea 14px, #cfcfe3 22px, #aeaec4 30px, #cfcfe3 36px); }
    .ri { position: relative; flex: none; display: flex; align-items: center; justify-content: center; width: 22px; height: 22px; }
    .ri .ico { width: 19px; height: 19px; }
    .rg { flex: none; width: 15px; height: 3px; margin-right: 6px; background: #f4f4fa; border-bottom: 1px solid #808088; }
    .rl { flex: none; width: 28px; height: 2px; background: #f4f4fa; border-top: 1px solid #808088; }

    .mini { position: absolute; z-index: 1; padding: 3px; background: #d4d0c8; border: 1px solid #707068; box-shadow: inset 0 0 0 1px #f0f0e8; display: flex; flex-direction: column; align-items: center; overflow: hidden; }
    .m-t { width: 100%; height: 15px; flex: none; display: flex; align-items: center; justify-content: space-between; padding-left: 2px; background: linear-gradient(90deg, #0a246a, #a6caf0); color: #fff; font-weight: 700; font-size: 13px; white-space: nowrap; }
    .x { width: 13px; height: 13px; background: #d4d0c8; border: 1px solid; border-color: #fff #404040 #404040 #fff; position: relative; flex: none; }
    .x svg { position: absolute; inset: 0; width: 100%; height: 100%; }
    .m-b { width: 100%; flex: 1; display: flex; flex-direction: column; align-items: center; gap: 4px; padding-top: 3px; background: linear-gradient(90deg, #e8e8f4, #cfcfe3 60%, #a8a8bc); }
    .m-b .ico { width: 19px; height: 19px; }
    .m-g { width: 14px; height: 3px; margin-right: 9px; background: #f4f4fa; border-bottom: 1px solid #808088; margin-bottom: 5px; }
    .m1 { left: 1458px; top: 552px; width: 36px; height: 58px; }
    .m2 { left: 1437px; top: 649px; width: 36px; height: 90px; }
    .m3 { left: 1535px; top: 664px; width: 38px; height: 75px; }
    .m4 { left: 1584px; top: 567px; width: 36px; height: 102px; }

    .dlg { position: absolute; left: 1372px; top: 734px; width: 261px; height: 205px; z-index: 3; overflow: hidden; background: #d4d0c8; border: 1px solid #505050; border-top-color: #d4d0c8; border-left-color: #d4d0c8; padding: 4px; }
    .d-t { height: 17px; display: flex; align-items: center; justify-content: space-between; padding: 0 1px 1px 0; background: linear-gradient(90deg, #989898, #bcbcbc); color: #d8d8d8; font-weight: 700; font-size: 12px; white-space: nowrap; }
    .d-bs { display: flex; gap: 2px; }
    .d-bs span { width: 16px; height: 14px; background: #d4d0c8; border: 1px solid; border-color: #fff #404040 #404040 #fff; color: #000; display: flex; align-items: center; justify-content: center; font-size: 12px; font-weight: 700; position: relative; }
    .d-bs svg { width: 13px; height: 13px; }
    .d-b { position: relative; height: 180px; padding: 11px 4px 0 7px; background: #fae3c2; font-size: 11px; }
    .d-r { display: flex; align-items: center; white-space: nowrap; }
    .d-r.r1 { height: 20px; justify-content: space-between; padding-right: 4px; }
    .d-r.r2 { height: 22px; margin-top: 3px; }
    .d-r.r3 { height: 16px; margin-top: 7px; }
    .d-r.r4 { height: 12px; margin-top: 9px; }
    .d-l { width: 57px; }
    .fld { height: 16px; display: flex; align-items: center; padding-left: 3px; background: #fff; border: 1px solid; border-color: #404040 #fff #fff #404040; }
    .fld.sel { width: 137px; background: #0a246a; color: #fff; }
    .fld.sup { width: 159px; }
    .fld.cmb { width: 152px; height: 20px; padding-right: 1px; justify-content: space-between; }
    .pick { width: 22px; height: 22px; background: #d4d0c8; border: 1px solid; border-color: #fff #404040 #404040 #fff; padding: 1px; }
    .pick .ico { width: 18px; height: 18px; }
    .chk { width: 11px; height: 11px; margin-right: 4px; border: 2px solid #e8c8a0; background: #d07820; box-shadow: inset 1px 1px 1px #f8b060; }
    .smo { display: flex; align-items: center; gap: 1px; margin-top: 5px; height: 14px; padding-right: 6px; }
    .smo hr { flex: 1; margin: 0; border: 0; border-top: 1px solid #808080; border-bottom: 1px solid #fff; }
    .rad { display: flex; align-items: center; margin-top: 5px; height: 16px; padding-left: 2px; white-space: nowrap; }
    .rad i { display: block; flex: none; width: 11px; height: 11px; border-radius: 50%; background: #fff8e0; border: 1px solid #404040; margin-right: 5px; }
    .rad i.on { background: radial-gradient(circle at 40% 35%, #4878d8, #001870); border-color: #e0c090; }
    .rad span { margin-right: 8px; }
    .d-btns { position: absolute; left: 28px; top: 151px; display: flex; gap: 7px; }
    .d-btn { width: 68px; height: 21px; display: flex; align-items: center; justify-content: center; background: #c9c9e0; border: 1px solid; border-color: #f4f4fa #606070 #606070 #f4f4fa; position: relative; }
    .d-btn.dot { padding-left: 12px; }
    .d-btn.off { color: #8a8a98; text-shadow: 1px 1px #f0f0f8; }
    .d-btn i { position: absolute; left: 4px; top: 4px; width: 12px; height: 12px; border-radius: 50%; }
    .d-btn i.g { background: radial-gradient(circle at 40% 35%, #80ff80, #008000); }
    .d-btn i.r { background: radial-gradient(circle at 40% 35%, #ffa0a0, #c00000); }
    .planet { position: absolute; left: 0; bottom: 0; width: 48px; height: 32px; }
  `;

  // lays a bar out from its centre list; the margin fills up to each centre
  private place(list: Bar[], start: number, horizontal: boolean) {
    let pos = start;
    return list.map(([n, at, drop]) => {
      const size = n === '|' || n === '-' ? 3 : n === '=' ? 2 : 22;
      const gap = at - size / 2 - pos;
      pos = at + size / 2;
      const st = horizontal ? `margin-left:${gap}px` : `margin-top:${gap}px`;
      if (n === '|') return html`<span class="grip" style=${st}></span>`;
      if (n === '-') return html`<span class="rg" style=${st}></span>`;
      if (n === '=') return html`<span class="rl" style=${st}></span>`;
      return html`<span class=${horizontal ? 'bi' : 'ri'} style=${st}>${ico(n, 'sh')}${drop ? html`<i class="drop"></i>` : ''}</span>`;
    });
  }

  private slotClass(i: number, s: string | null) {
    const grip = i < FIRST_ROW ? (i % 2 ? 'g1' : 'g0') : '';
    return `slot ${grip} ${s ? '' : 'blank'}`;
  }

  private xMark() {
    return html`<svg viewBox="0 0 13 13"><path d="M3 3l7 7M10 3l-7 7" stroke="#000" stroke-width="1.5"/></svg>`;
  }

  private winBtns() {
    return html`<span class="win">
      <span class="wb"><svg viewBox="0 0 14 12"><path d="M3 9h7" stroke="#000" stroke-width="2"/></svg></span>
      <span class="wb"><svg viewBox="0 0 14 12"><path d="M5 1.5h6v5H9M2.5 4.5h6v5h-6z" fill="none" stroke="#000"/></svg></span>
      <span class="wb cl"><svg viewBox="0 0 14 12"><path d="M3.5 2l7 7.5M10.5 2l-7 7.5" stroke="#000" stroke-width="1.5"/></svg></span>
    </span>`;
  }

  private canvasArt() {
    const yel = '#e8e800';
    const lav = '#d8c8f8';
    return html`<svg class="canvas" width="1680" height="932" viewBox="0 38 1680 932" shape-rendering="crispEdges">
      <defs><linearGradient id="band" gradientUnits="userSpaceOnUse" x1="300" x2="1410" y1="0" y2="0">
        <stop offset="0" stop-color="#787c58"/><stop offset=".4" stop-color="#7e8159"/><stop offset=".46" stop-color="#8b8e63"/><stop offset=".75" stop-color="#a7aa7a"/><stop offset="1" stop-color="#c0c48e"/>
      </linearGradient></defs>
      <path d=${BAND} fill="url(#band)" stroke="#0c0c0c" stroke-width="2.2"/>
      ${TABS.map(([x, y, r]) => svg`<g transform="rotate(${r} ${x} ${y})"><path d="M${x - 8} ${y + 3}l2-5 4-1v-2h5v2l4 1 2 5z" fill="#a8aa78" stroke="#101010" stroke-width="1.4"/></g>`)}

      <g fill="none" stroke=${lav} stroke-width="2">
        <path d="M1546 77C1570 76 1588 92 1588 110L1546 111Z" fill="#000040"/>
        <path d="M1547 66C1540 72 1538 90 1544 101C1547 92 1549 76 1547 66Z" fill="#000040"/>
        <path d="M1516 127C1535 122 1560 124 1572 135L1573 143L1567 154H1521Z" fill="#1b4560"/>
        <path d="M1544 100L1543 136"/>
      </g>
      <circle cx="1549" cy="64" r="3.5" fill=${lav}/>
      <path d="M1536 136h9v9h-9z" fill="#d00000"/>
      <g font-family="Liberation Sans" font-size="12" fill=${yel}>
        <text x="1555" y="60">Z</text><text x="1593" y="106">X</text><text x="1549" y="85">Y</text>
      </g>

      <path d="M568 605V634L614 636" fill="none" stroke=${yel} stroke-width="1.3"/>
      <path d="M566 632h4v4h-4zM611 634h3v3h-3z" fill=${yel}/>
      <g font-family="Liberation Sans" font-size="12" fill=${yel}>
        <text x="568" y="601">Y</text><text x="606" y="632">H</text>
      </g>

      <path d="M854 604L943 607L934 682L845 679Z" fill="none" stroke="#fff" stroke-width="1.2"/>
      <path d="M879 606L917 606L916 623L878 622Z" fill="none" stroke="#fff" stroke-width="1.2"/>
      <path d="M879 605H917" stroke="#fff" stroke-width="2"/>
      <path d="M877 621h3v3h-3zM914 622h3v3h-3zM878 604h3v3h-3zM916 605h3v3h-3z" fill="#fff"/>
      <circle cx="900" cy="595" r="3" fill="none" stroke="#fff" stroke-width="1.4"/>
      <path d="M895 593h2v3h-2zM903 594h2v3h-2z" fill="#fff"/>
      <path d="M898 602L894 643L848 642" fill="none" stroke=${yel} stroke-width="1.3"/>
      <path d="M854 637V647M862 637V647M848 641h8" stroke=${yel}/>
      <path d="M893 642h3v3h-3z" fill=${yel}/>
      <path d="M895 601l3 4 3-4M898 605v3" fill="none" stroke=${yel}/>
      <path d="M1640 952l-4 4 4 4" fill="none" stroke="#fff"/>
    </svg>`;
  }

  private mini(cls: string, letter: string, icons: string[]) {
    return html`<div class="mini ${cls}">
      <div class="m-t"><span>${letter}</span><span class="x">${this.xMark()}</span></div>
      <div class="m-b"><span class="m-g"></span>${icons.map((n) => ico(n, 'sh'))}</div>
    </div>`;
  }

  render() {
    const cap = (s: string) => html`<u>${s[0]}</u>${s.slice(1)}`;
    return html`<div class="app">
      <div class="title">${ico('logo')}<span class="txt">CATIA V5 - [G:\\Бок световой\\V3\\Planck_bottom_lamp : 3D View]</span>${this.winBtns()}</div>
      <div class="menu">
        ${ico('logo')}<span class="start">${cap('Start')}</span>
        <span class="mi en">ENOVIA V5 VPM</span>
        ${['File', 'Edit', 'View', 'Insert', 'Tools', 'Window', 'Help'].map((m) => html`<span class="mi">${cap(m)}</span>`)}
        ${this.winBtns()}
      </div>

      <div class="work">
        <div class="main">
          <div class="view">
            ${this.canvasArt()}
            <div class="vs">
              <div class="btn"><i class="tu"></i></div>
              <div class="dots"></div>
              <div class="fill"></div>
              <div class="btn end"><i class="td"></i></div>
            </div>
            <div class="tree">
              ${TREE.map((r) => html`<div class="row">
                ${r.lv === 1 ? html`<span class="cell ${r.pipe ? 'pipe' : ''}"></span>` : ''}
                <span class="cell node ${r.last ? 'end' : ''} ${r.first ? 'first' : ''}">${r.tog ? html`<i class="tog ${r.tog === '+' ? 'plus' : ''}"></i>` : ''}</span>
                ${r.ic ? html`<span class="tic ${r.hatch ? 'hatch' : ''}">${ico(r.ic)}</span>` : html`<span class="tic"></span>`}
                <span class="lbl ${r.u ? 'u' : ''}">${r.t}</span>
              </div>`)}
            </div>
          </div>
          <div class="hs">
            <span class="corner"></span><span class="lb"><i class="tl"></i></span><span class="mid"></span><span class="rb"><i class="tr"></i></span>
          </div>
        </div>
        <div class="rt">${this.place(RIGHT, 38, false)}</div>

        ${this.mini('m1', 'A..', ['m1'])}
        ${this.mini('m2', 'A..', ['m2', 'm3', 'm4'])}
        ${this.mini('m3', 'B...', ['m5', 'm6'])}
        ${this.mini('m4', 'D..', ['d1', 'd2', 'd3'])}

        <div class="pal">
          <div class="bar-t">Tools Palette</div>
          <div class="pal-b">
            <div class="slots">
              ${SLOTS.map((s, i) => html`<span class=${this.slotClass(i, s)}>${s ? ico(s, 'sh') : ''}</span>`)}
            </div>
          </div>
        </div>

        <div class="dlg">
          <div class="d-t"><span>Projection Definition</span><span class="d-bs"><span>?</span><span>${this.xMark()}</span></span></div>
          <div class="d-b">
            <svg class="planet" viewBox="0 0 52 40" preserveAspectRatio="none">${I.planet}</svg>
            <div class="d-r r1"><span>Projection type :</span>
              <span class="fld cmb"><span>Normal</span><span class="cb-b"><i></i></span></span></div>
            <div class="d-r r2"><span class="d-l">Projected:</span><span class="fld sel">No selection</span><span class="pick">${ico('multi')}</span></div>
            <div class="d-r r3"><span class="d-l">Support:</span><span class="fld sup">No selection</span></div>
            <div class="d-r r4"><span class="chk"></span>Nearest solution</div>
            <div class="smo"><span>Smoothing</span><hr /></div>
            <div class="rad"><i class="on"></i><span>None</span><i></i><span>Tangency</span><i></i><span>Curvature</span></div>
            <div class="d-btns">
              <span class="d-btn off dot"><i class="g"></i>OK</span>
              <span class="d-btn dot"><i class="r"></i>Cancel</span>
              <span class="d-btn off">Preview</span>
            </div>
          </div>
        </div>
      </div>

      <div class="bt">
        ${this.place(BOTTOM, 0, true)}
        <span class="combo"><span class="cb-t">Geometrical Set.2</span><span class="cb-b"><i></i></span></span>
        ${this.place(BOTTOM2, 1366, true)}
        <span class="ds"><span class="m">D<b>S</b><em>3</em></span><span class="n">CATIA</span></span>
      </div>
      <div class="st">
        <span class="msg">Select the point or curve to be projected</span>
        <input />
        <span class="sb"><svg viewBox="0 0 16 16"><path d="M2 2h11v10H2z" fill="none" stroke="#000" stroke-width="1.6"/><path d="M9 10h5v4H9z" fill="#000"/></svg></span>
        <span class="sb"><svg viewBox="0 0 16 16"><circle cx="8" cy="7" r="6" fill="#fff" stroke="#000"/><path d="M7 3h2v2H7zM7 6h2v5H7z" fill="#0040a0"/></svg></span>
      </div>
      <div class="foot"></div>
    </div>`;
  }
}
